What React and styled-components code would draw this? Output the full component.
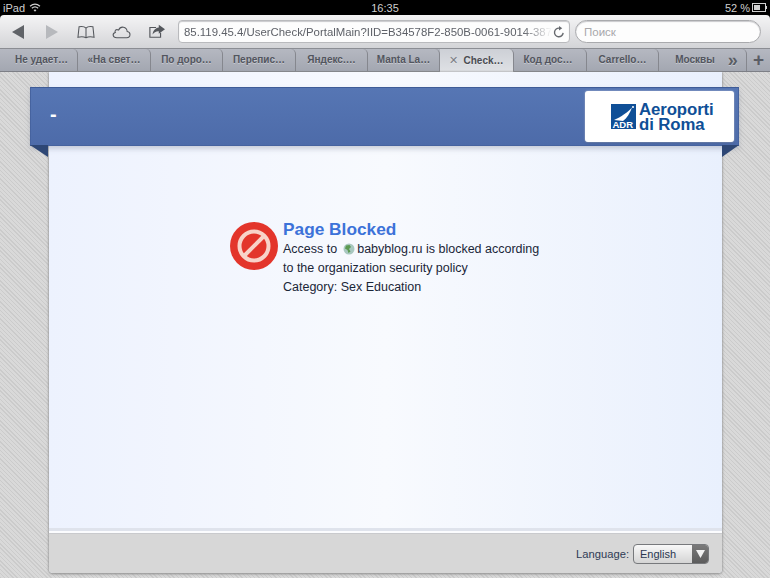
import React from "react"
import styled, { createGlobalStyle } from "styled-components"

const GlobalStyle = createGlobalStyle`
  html, body {
    margin: 0;
    padding: 0;
    background: #d4d4d4;
  }
`

const Screen = styled.div`
  width: 770px;
  height: 578px;
  overflow: hidden;
  display: flex;
  flex-direction: column;
  background: #000;
  font-family: "Liberation Sans", Arial, sans-serif;
`

const StatusBar = styled.div`
  height: 15px;
  flex: none;
  display: grid;
  grid-template-columns: 1fr auto 1fr;
  align-items: center;
  padding: 0 3px;
  color: #cfcfcf;
  font-size: 11px;
  background: #000;
`

const StatusLeft = styled.div`
  display: flex;
  align-items: center;
  gap: 4px;
`

const StatusRight = styled.div`
  display: flex;
  align-items: center;
  justify-content: flex-end;
  gap: 2px;
`

const Toolbar = styled.div`
  height: 33px;
  flex: none;
  display: flex;
  align-items: center;
  padding: 0 9px 0 12px;
  border-radius: 4px 4px 0 0;
  background: linear-gradient(#f4f4f5, #e6e6e8 45%, #d3d4d7);
  box-sizing: border-box;
`

const NavIcon = styled.svg`
  flex: none;
  display: block;
  margin-right: ${(p) => p.$gap}px;
`

const UrlField = styled.div`
  width: 392px;
  height: 23px;
  flex: none;
  box-sizing: border-box;
  display: flex;
  align-items: center;
  justify-content: space-between;
  padding: 0 4px 0 5px;
  background: #fdfdfd;
  border: 1px solid #b9babd;
  border-radius: 4px;
  box-shadow: inset 0 1px 1px #c9c9cc;
  font-size: 11.4px;
  color: #5e6168;
`

const UrlText = styled.span`
  white-space: nowrap;
  -webkit-mask-image: linear-gradient(90deg, #000 92%, transparent);
  mask-image: linear-gradient(90deg, #000 92%, transparent);
`

const SearchField = styled.div`
  width: 186px;
  height: 23px;
  flex: none;
  box-sizing: border-box;
  margin-left: 5px;
  padding: 0 8px;
  display: flex;
  align-items: center;
  background: #fdfdfd;
  border: 1px solid #a9aaad;
  border-radius: 12px;
  box-shadow: inset 0 1px 1px #c9c9cc;
  font-size: 11.5px;
  color: #a8a8ab;
`

const TabBar = styled.div`
  height: 24px;
  flex: none;
  display: flex;
  box-sizing: border-box;
  border-top: 1px solid #8b8d93;
  border-bottom: 1px solid #7d7f86;
  background: linear-gradient(#b5b8c1, #a3a7b1);
`

const Tab = styled.div`
  width: ${(p) => p.$w}px;
  flex: none;
  box-sizing: border-box;
  display: flex;
  align-items: center;
  justify-content: center;
  gap: 5px;
  padding: 0 ${(p) => p.$padRight || 0}px 1px ${(p) => p.$padLeft || 0}px;
  font-size: 10px;
  font-weight: bold;
  white-space: nowrap;
  color: ${(p) => (p.$active ? "#4a4c52" : "#52555e")};
  text-shadow: 0 1px 0 rgba(255, 255, 255, 0.35);
  border-right: 1px solid #85878e;
  border-top-right-radius: 5px;
  background: ${(p) =>
    p.$active ? "linear-gradient(#cdd0d6, #dfe1e5)" : "transparent"};
  margin-bottom: ${(p) => (p.$active ? "-1px" : "0")};
`

const TabClose = styled.span`
  font-size: 11px;
  font-weight: normal;
  color: #7c7f86;
`

const More = styled.span`
  margin-left: 8px;
  font-size: 18px;
  line-height: 14px;
  color: #5a5d65;
`

const AddTab = styled.div`
  flex: 1;
  display: flex;
  align-items: center;
  justify-content: center;
  font-size: 19px;
  font-weight: bold;
  color: #5a5d65;
`

const Backdrop = styled.div`
  flex: 1;
  min-height: 0;
  display: flex;
  box-sizing: border-box;
  padding: 0 48px 5px 49px;
  background-color: #d3d3d3;
  background-image: repeating-linear-gradient(
    45deg,
    #cbcbcb 0 1px,
    #d9d9d9 1px 3px
  );
`

const Card = styled.div`
  flex: 1;
  display: flex;
  flex-direction: column;
  border-radius: 0 0 4px 4px;
  box-shadow: 0 0 2px #9a9a9a, 0 1px 3px #8f8f8f;
  background: linear-gradient(90deg, #edf2fe, #f8fafe 50%, #e9f0fd);
`

const Banner = styled.div`
  position: relative;
  height: 59px;
  flex: none;
  display: flex;
  align-items: center;
  justify-content: space-between;
  box-sizing: border-box;
  margin: 15px -17px 0 -19px;
  padding: 0 4px 0 19px;
  background: linear-gradient(#5676b4, #4d6ba9);
  border: 1px solid #46639f;
  border-top-color: #3f5c97;
  box-shadow: 0 3px 5px rgba(120, 130, 150, 0.35);
  color: #fff;
  font-size: 20px;
  font-weight: bold;
`

const BannerTitle = styled.span`
  margin-bottom: 4px;
`

const Fold = styled.span`
  position: absolute;
  top: 100%;
  ${(p) => (p.$right ? "right: -1px;" : "left: -1px;")}
  width: 0;
  height: 0;
  border-top: 12px solid #2e4775;
  ${(p) =>
    p.$right
      ? "border-right: 17px solid transparent;"
      : "border-left: 18px solid transparent;"}
`

const LogoBox = styled.div`
  width: 149px;
  height: 51px;
  box-sizing: border-box;
  display: flex;
  align-items: center;
  gap: 3px;
  padding: 0 0 1px 26px;
  background: #fff;
  border-radius: 3px;
  box-shadow: 0 0 2px #c6cfdf, 0 1px 2px rgba(40, 60, 100, 0.5);
`

const LogoWords = styled.div`
  margin-top: 1px;
  color: #0f4f97;
  font-size: 16.8px;
  font-weight: bold;
  line-height: 15px;
  letter-spacing: -0.1px;
`

const Message = styled.div`
  flex: 1;
  display: flex;
  gap: 5px;
  padding: 76px 0 0 181px;
`

const MessageText = styled.div`
  color: #1a2638;
  font-size: 12.5px;
  line-height: 19px;
`

const Title = styled.div`
  color: #3c72d9;
  font-size: 17.3px;
  font-weight: bold;
  line-height: 20px;
  margin: -3px 0 1px;
`

const Globe = styled.svg`
  display: inline-block;
  vertical-align: -2px;
  margin: 0 2px 0 6px;
`

const FooterRule = styled.div`
  height: 5px;
  flex: none;
  background: linear-gradient(#dfe3ec 0 3px, #fbfcfe 3px);
`

const Footer = styled.div`
  height: 40px;
  flex: none;
  display: flex;
  align-items: center;
  justify-content: flex-end;
  gap: 4px;
  box-sizing: border-box;
  padding: 0 13px 0 0;
  border-top: 1px solid #c9cacd;
  border-radius: 0 0 4px 4px;
  background: #d7d7d7;
  color: #2f3b55;
  font-size: 11.2px;
`

const LangSelect = styled.div`
  width: 76px;
  height: 20px;
  box-sizing: border-box;
  display: flex;
  justify-content: space-between;
  border: 1px solid #77797c;
  border-radius: 4px;
  overflow: hidden;
  background: linear-gradient(#f8f8f8, #d4d4d4);
  color: #2b3750;
  font-size: 11px;
`

const LangValue = styled.span`
  padding-left: 6px;
  line-height: 18px;
`

const LangArrow = styled.span`
  width: 16px;
  display: flex;
  align-items: center;
  justify-content: center;
  background: linear-gradient(#7a7a7a, #5c5c5c);
`

const tabs = [
  { label: "Не удает…", w: 78, padLeft: 6 },
  { label: "«На свет…", w: 73 },
  { label: "По доро…", w: 72 },
  { label: "Перепис…", w: 73 },
  { label: "Яндекс.…", w: 72 },
  { label: "Manta La…", w: 72 },
  { label: "Check…", w: 74, active: true },
  { label: "Код дос…", w: 73, padRight: 4 },
  { label: "Carrello…", w: 72 },
  { label: "Москвы", w: 88, padLeft: 8, more: true },
]

const App = () => {
  return (
    <Screen>
      <GlobalStyle />
      <StatusBar>
        <StatusLeft>
          iPad
          <svg width="12" height="9" viewBox="0 0 13 10" fill="none" stroke="#cfcfcf" strokeWidth="1.4">
            <path d="M1 3.6C4.3 .7 8.7 .7 12 3.6" />
            <path d="M3 5.8C5 4 8 4 10 5.8" />
            <path d="M6.5 9.6 4.9 7.8C5.8 7 7.2 7 8.1 7.8Z" fill="#cfcfcf" stroke="none" />
          </svg>
        </StatusLeft>
        <span>16:35</span>
        <StatusRight>
          52 %
          <svg width="15" height="9" viewBox="0 0 15 9">
            <rect x=".5" y=".5" width="13" height="8" fill="none" stroke="#cfcfcf" />
            <rect x="2" y="2" width="6" height="5" fill="#cfcfcf" />
            <rect x="14" y="3" width="1" height="3" fill="#cfcfcf" />
          </svg>
        </StatusRight>
      </StatusBar>

      <Toolbar>
        <NavIcon $gap={22} width="12" height="14" viewBox="0 0 13 14" preserveAspectRatio="none">
          <path d="M13 0V14L0 7Z" fill="#606368" />
        </NavIcon>
        <NavIcon $gap={19} width="12" height="14" viewBox="0 0 13 14" preserveAspectRatio="none">
          <path d="M0 0V14L13 7Z" fill="#b7b9bd" />
        </NavIcon>
        <NavIcon $gap={17} width="18" height="14" viewBox="0 0 19 14" fill="none" stroke="#54575c" strokeWidth="1.1">
          <path d="M9.5 3C8 1.3 5 1 2.2 1.5L1 12.5C4 11.8 7.500 12 9.500 13 11.500 12 15 11.800 18 12.500L16.800 1.500C14 1 11 1.300 9.500 3V13" />
        </NavIcon>
        <NavIcon $gap={18} width="19" height="14" viewBox="0 0 20 14" fill="none" stroke="#54575c" strokeWidth="1.1">
          <path d="M5 13H15.500C20 13 20 7 16 6.500 15.500 1.500 9 0 7 5 4 3.500 2.500 6 3.500 7.500 0 8.500 .5 13 5 13Z" />
        </NavIcon>
        <NavIcon $gap={13} width="16" height="15" viewBox="0 0 18 15">
          <path d="M8 3H1V14H13V9" fill="none" stroke="#54575c" strokeWidth="1.3" />
          <path d="M11 0 18 5 11 10V7.200C8 7 5.500 8.500 4 11 4.500 6.500 7 3.500 11 3Z" fill="#54575c" />
        </NavIcon>
        <UrlField>
          <UrlText>85.119.45.4/UserCheck/PortalMain?IID=B34578F2-850B-0061-9014-387</UrlText>
          <svg width="12" height="12" viewBox="0 0 13 13" fill="none" stroke="#66696e" strokeWidth="1.5">
            <path d="M11 7.500A4.700 4.700 0 1 1 7 2.300" />
            <path d="M6.500 0 10 2.400 6.500 4.800Z" fill="#66696e" stroke="none" />
          </svg>
        </UrlField>
        <SearchField>Поиск</SearchField>
      </Toolbar>

      <TabBar>
        {tabs.map((tab) => (
          <Tab key={tab.label} $w={tab.w} $active={tab.active} $padLeft={tab.padLeft} $padRight={tab.padRight}>
            {tab.active && <TabClose>✕</TabClose>}
            {tab.label}
            {tab.more && <More>»</More>}
          </Tab>
        ))}
        <AddTab>+</AddTab>
      </TabBar>

      <Backdrop>
        <Card>
          <Banner>
            <BannerTitle>-</BannerTitle>
            <LogoBox>
              <svg width="25" height="25" viewBox="0 0 25 25">
                <rect width="25" height="25" fill="#0f4f97" />
                <path d="M3 16C10 13 17 8 21 3.500 19 9 16 14 12 17Z" fill="#fff" />
                <circle cx="22" cy="3" r="1" fill="#fff" />
                <text x="1.500" y="23.500" fontSize="9.500" fontWeight="bold" fill="#fff" fontFamily="Liberation Sans">ADR</text>
              </svg>
              <LogoWords>
                Aeroporti
                <br />
                di Roma
              </LogoWords>
            </LogoBox>
            <Fold />
            <Fold $right />
          </Banner>

          <Message>
            <svg width="48" height="48" viewBox="0 0 48 48">
              <circle cx="24" cy="24" r="24" fill="#e3352b" />
              <circle cx="24" cy="24" r="14.500" fill="none" stroke="#f8d3c9" strokeWidth="4" />
              <path d="M14 34 34 14" stroke="#f8d3c9" strokeWidth="4" />
            </svg>
            <MessageText>
              <Title>Page Blocked</Title>
              Access to
              <Globe width="12" height="12" viewBox="0 0 12 12">
                <circle cx="6" cy="6" r="5.500" fill="#a9c8c0" />
                <path d="M3 2.500 6.500 2 8 4 6 6 7.500 8.500 5.500 10 4.500 7 2 5.500Z" fill="#5c9a52" />
              </Globe>
              babyblog.ru is blocked according
              <br />
              to the organization security policy
              <br />
              Category: Sex Education
            </MessageText>
          </Message>

          <FooterRule />
          <Footer>
            Language:
            <LangSelect>
              <LangValue>English</LangValue>
              <LangArrow>
                <svg width="9" height="8" viewBox="0 0 9 8">
                  <path d="M0 0H9L4.500 8Z" fill="#f2f2f2" />
                </svg>
              </LangArrow>
            </LangSelect>
          </Footer>
        </Card>
      </Backdrop>
    </Screen>
  )
}

export default App
